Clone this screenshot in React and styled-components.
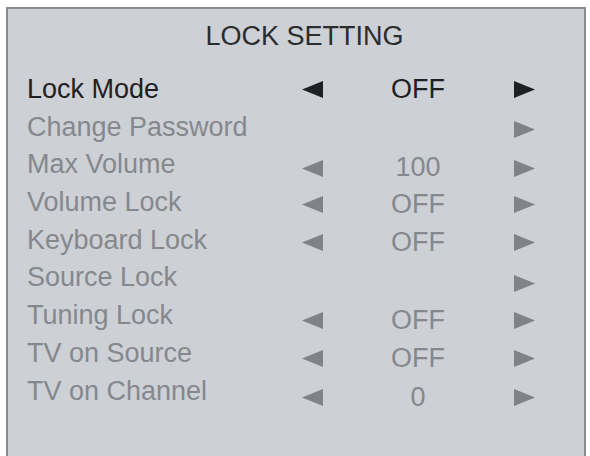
import React from 'react'
import styled, { createGlobalStyle } from 'styled-components'

const GlobalStyle = createGlobalStyle`
    html, body {
        margin: 0;
        padding: 0;
        background: #ffffff;
        overflow: hidden;
    }
    body {
        font-family: "Liberation Sans", Arial, sans-serif;
    }
`;

const rows = [
    { label: 'Lock Mode', value: 'OFF', left: true, active: true, drop: 0 },
    { label: 'Change Password', value: '', left: false, drop: 2 },
    { label: 'Max Volume', value: '100', left: true, drop: 3 },
    { label: 'Volume Lock', value: 'OFF', left: true, drop: 2 },
    { label: 'Keyboard Lock', value: 'OFF', left: true, drop: 2 },
    { label: 'Source Lock', value: '', left: false, drop: 5 },
    { label: 'Tuning Lock', value: 'OFF', left: true, drop: 5 },
    { label: 'TV on Source', value: 'OFF', left: true, drop: 5 },
    { label: 'TV on Channel', value: '0', left: true, drop: 6 },
];

function Arrow({ dir }) {
    const points = dir === 'left' ? '21,0 21,17 0,8.5' : '0,0 0,17 21,8.5';
    return (
        <svg width="21" height="17" viewBox="0 0 21 17">
            <polygon points={points} fill="currentColor" />
        </svg>
    );
}

function App() {
    return (
        <>
            <GlobalStyle />
            <Panel>
                <Title>LOCK SETTING</Title>
                <List>
                    {rows.map((row) => (
                        <Row key={row.label} $active={row.active}>
                            <Label>{row.label}</Label>
                            <ArrowCell $drop={row.drop}>
                                {row.left && <Arrow dir="left" />}
                            </ArrowCell>
                            <Value $drop={row.drop}>{row.value}</Value>
                            <ArrowCell $drop={row.drop}>
                                <Arrow dir="right" />
                            </ArrowCell>
                        </Row>
                    ))}
                </List>
            </Panel>
        </>
    );
}

const Panel = styled.div`
    margin: 7px 0 0 6px;
    width: 576px;
    height: 447px;
    overflow: hidden;
    background: #cdd0d5;
    border: 2px solid #8a8c90;
    border-bottom: none;
    box-sizing: content-box;
`;

const Title = styled.h1`
    margin: 7px 0 0;
    padding-left: 17px;
    font-size: 27px;
    font-weight: 400;
    line-height: 40px;
    text-align: center;
    color: #2b2c2e;
`;

const List = styled.div`
    margin-top: 15px;
    display: flex;
    flex-direction: column;
`;

const Row = styled.div`
    display: grid;
    grid-template-columns: 274px 22px 190px 22px;
    height: 37.7px;
    align-items: center;
    padding-left: 19px;
    font-size: 27px;
    line-height: 37.7px;
    color: ${({ $active }) => ($active ? '#1f2022' : '#85888d')};

    svg {
        color: ${({ $active }) => ($active ? '#1f2022' : '#7f8287')};
    }
`;

const Label = styled.div`
    white-space: nowrap;
`;

const ArrowCell = styled.div`
    display: flex;
    align-items: center;
    justify-content: center;
    transform: translateY(${({ $drop }) => $drop}px);
`;

const Value = styled.div`
    text-align: center;
    transform: translateY(${({ $drop }) => $drop}px);
`;

export default App;
